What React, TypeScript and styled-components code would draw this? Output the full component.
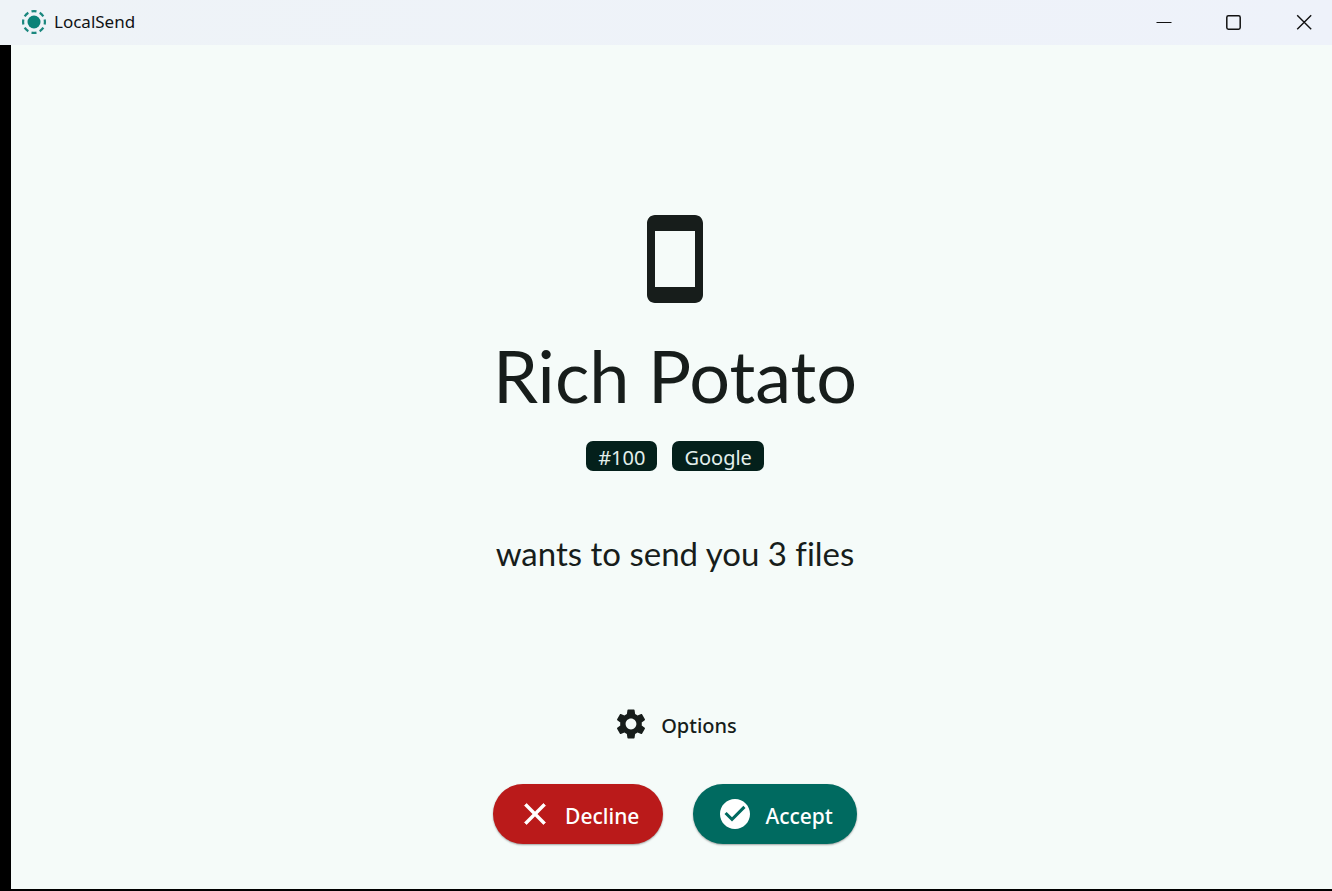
import React from "react";
import styled, { createGlobalStyle } from "styled-components";

const GlobalStyle = createGlobalStyle`
  * { box-sizing: border-box; }
  body {
    margin: 0;
    background: #000;
    color: #171d1b;
    font-family: "Noto Sans", sans-serif;
  }
  button { font: inherit; color: inherit; border: 0; cursor: pointer; }
`;

const Window = styled.div`
  display: flex;
  flex-direction: column;
  min-height: 100vh;
`;

const TitleBar = styled.header`
  display: flex;
  align-items: center;
  height: 45px;
  padding: 0 0 1px 22px;
  background: linear-gradient(90deg, #eef3f7, #eef2fa);
`;

const AppName = styled.span`
  flex: 1;
  margin-left: 8px;
  font-size: 17px;
  line-height: 24px;
  color: #101214;
`;

const WindowControls = styled.div`
  display: flex;
  gap: 14px;
`;

const WindowButton = styled.button`
  display: grid;
  place-items: center;
  width: 56px;
  height: 44px;
  padding: 0;
  background: transparent;
`;

const Page = styled.main`
  flex: 1;
  display: flex;
  flex-direction: column;
  align-items: center;
  margin: 0 0 2px 11px;
  padding: 44px 0 45px 7px;
  background: #f5fbf9;
`;

const Sender = styled.section`
  flex: 1;
  display: flex;
  flex-direction: column;
  align-items: center;
  justify-content: center;
`;

const DeviceName = styled.h1`
  margin: 24px 0 22px;
  font-family: Lato, sans-serif;
  font-size: 72px;
  line-height: 88px;
  font-weight: 400;
`;

const Badges = styled.div`
  display: flex;
  gap: 15px;
`;

const Badge = styled.span`
  padding: 2px 12px 0;
  height: 30px;
  border-radius: 7px;
  background: #04201b;
  color: #e3efeb;
  font-size: 20px;
  line-height: 30px;
`;

const Message = styled.p`
  margin: 62px 0 0;
  font-family: Lato, sans-serif;
  font-size: 33px;
  line-height: 40px;
  font-variant-ligatures: none;
`;

const Label = styled.span`
  padding-top: 3px;
  line-height: 30px;
  font-weight: 500;
`;

const OptionsButton = styled.button`
  display: flex;
  align-items: center;
  gap: 12px;
  height: 60px;
  padding: 0 12px;
  background: transparent;
  font-size: 20px;
`;

const Actions = styled.div`
  display: flex;
  gap: 30px;
  margin-top: 30px;
`;

const ActionButton = styled.button<{ $color: string }>`
  display: flex;
  align-items: center;
  gap: 12px;
  height: 60px;
  padding: 0 24px;
  border-radius: 30px;
  background: ${(p) => p.$color};
  color: #fff;
  font-size: 21px;
  box-shadow: 0 1px 2px rgba(0, 0, 0, 0.35);
`;

const Icon = ({ d, size, bold }: { d: string; size: number; bold?: boolean }) => (
  <svg
    width={size}
    height={size}
    viewBox="0 0 24 24"
    fill="currentColor"
    stroke={bold ? "currentColor" : "none"}
    strokeWidth="0.5"
    aria-hidden="true"
  >
    <path d={d} />
  </svg>
);

const phone =
  "M17 1H7c-1.1 0-2 .9-2 2v18c0 1.1.9 2 2 2h10c1.1 0 2-.9 2-2V3c0-1.1-.9-2-2-2zM17 19H7V5h10v14z";
const gear =
  "M19.14 12.94c.04-.3.06-.61.06-.94 0-.32-.02-.64-.07-.94l2.03-1.58c.18-.14.23-.41.12-.61l-1.92-3.32c-.12-.22-.37-.29-.59-.22l-2.39.96c-.5-.38-1.03-.7-1.62-.94l-.36-2.54c-.04-.24-.24-.41-.48-.41h-3.84c-.24 0-.43.17-.47.41l-.36 2.54c-.59.24-1.13.57-1.62.94l-2.39-.96c-.22-.08-.47 0-.59.22L2.74 8.87c-.12.21-.08.47.12.61l2.03 1.58c-.05.3-.09.63-.09.94s.02.64.07.94l-2.03 1.58c-.18.14-.23.41-.12.61l1.92 3.32c.12.22.37.29.59.22l2.39-.96c.5.38 1.03.7 1.62.94l.36 2.54c.05.24.24.41.48.41h3.84c.24 0 .44-.17.47-.41l.36-2.54c.59-.24 1.13-.56 1.62-.94l2.39.96c.22.08.47 0 .59-.22l1.92-3.32c.12-.22.07-.47-.12-.61l-2.01-1.58zM12 15.6c-1.98 0-3.6-1.62-3.6-3.6s1.62-3.6 3.6-3.6 3.6 1.62 3.6 3.6-1.62 3.6-3.6 3.6z";
const cross =
  "M19 6.41L17.59 5 12 10.59 6.41 5 5 6.41 10.59 12 5 17.59 6.41 19 12 13.41 17.59 19 19 17.59 13.41 12z";
const check =
  "M12 2C6.48 2 2 6.48 2 12s4.48 10 10 10 10-4.48 10-10S17.52 2 12 2zm-2 15l-5-5 1.41-1.41L10 14.17l7.59-7.59L19 8l-9 9z";

const Logo = () => (
  <svg width="24" height="24" viewBox="0 0 24 24" aria-hidden="true">
    <circle cx="12" cy="12" r="6.5" fill="#0b8278" />
    <circle
      cx="12"
      cy="12"
      r="10.9"
      fill="none"
      stroke="#1a877e"
      strokeWidth="2.2"
      pathLength="80"
      strokeDasharray="6 4"
      strokeDashoffset="3"
    />
  </svg>
);

export default function App() {
  return (
    <>
      <GlobalStyle />
      <Window>
        <TitleBar>
          <Logo />
          <AppName>LocalSend</AppName>
          <WindowControls>
            <WindowButton aria-label="Minimize">
              <svg width="16" height="16" viewBox="0 0 16 16">
                <path d="M0.5 8.5h15" stroke="#111" />
              </svg>
            </WindowButton>
            <WindowButton aria-label="Maximize">
              <svg width="16" height="16" viewBox="0 0 16 16">
                <rect x="0.8" y="1.8" width="13.4" height="13.4" rx="1.6" fill="none" stroke="#111" strokeWidth="1.5" />
              </svg>
            </WindowButton>
            <WindowButton aria-label="Close">
              <svg width="16" height="16" viewBox="0 0 16 16">
                <path d="M1.2 1.2l14 14M15.2 1.2l-14 14" stroke="#111" strokeWidth="1.4" />
              </svg>
            </WindowButton>
          </WindowControls>
        </TitleBar>
        <Page>
          <Sender>
            <Icon d={phone} size={96} />
            <DeviceName>Rich Potato</DeviceName>
            <Badges>
              <Badge>#100</Badge>
              <Badge>Google</Badge>
            </Badges>
            <Message>wants to send you 3 files</Message>
          </Sender>
          <OptionsButton>
            <Icon d={gear} size={36} />
            <Label>Options</Label>
          </OptionsButton>
          <Actions>
            <ActionButton $color="#ba1a1a">
              <Icon d={cross} size={36} bold />
              <Label>Decline</Label>
            </ActionButton>
            <ActionButton $color="#006a60">
              <Icon d={check} size={36} />
              <Label>Accept</Label>
            </ActionButton>
          </Actions>
        </Page>
      </Window>
    </>
  );
}
